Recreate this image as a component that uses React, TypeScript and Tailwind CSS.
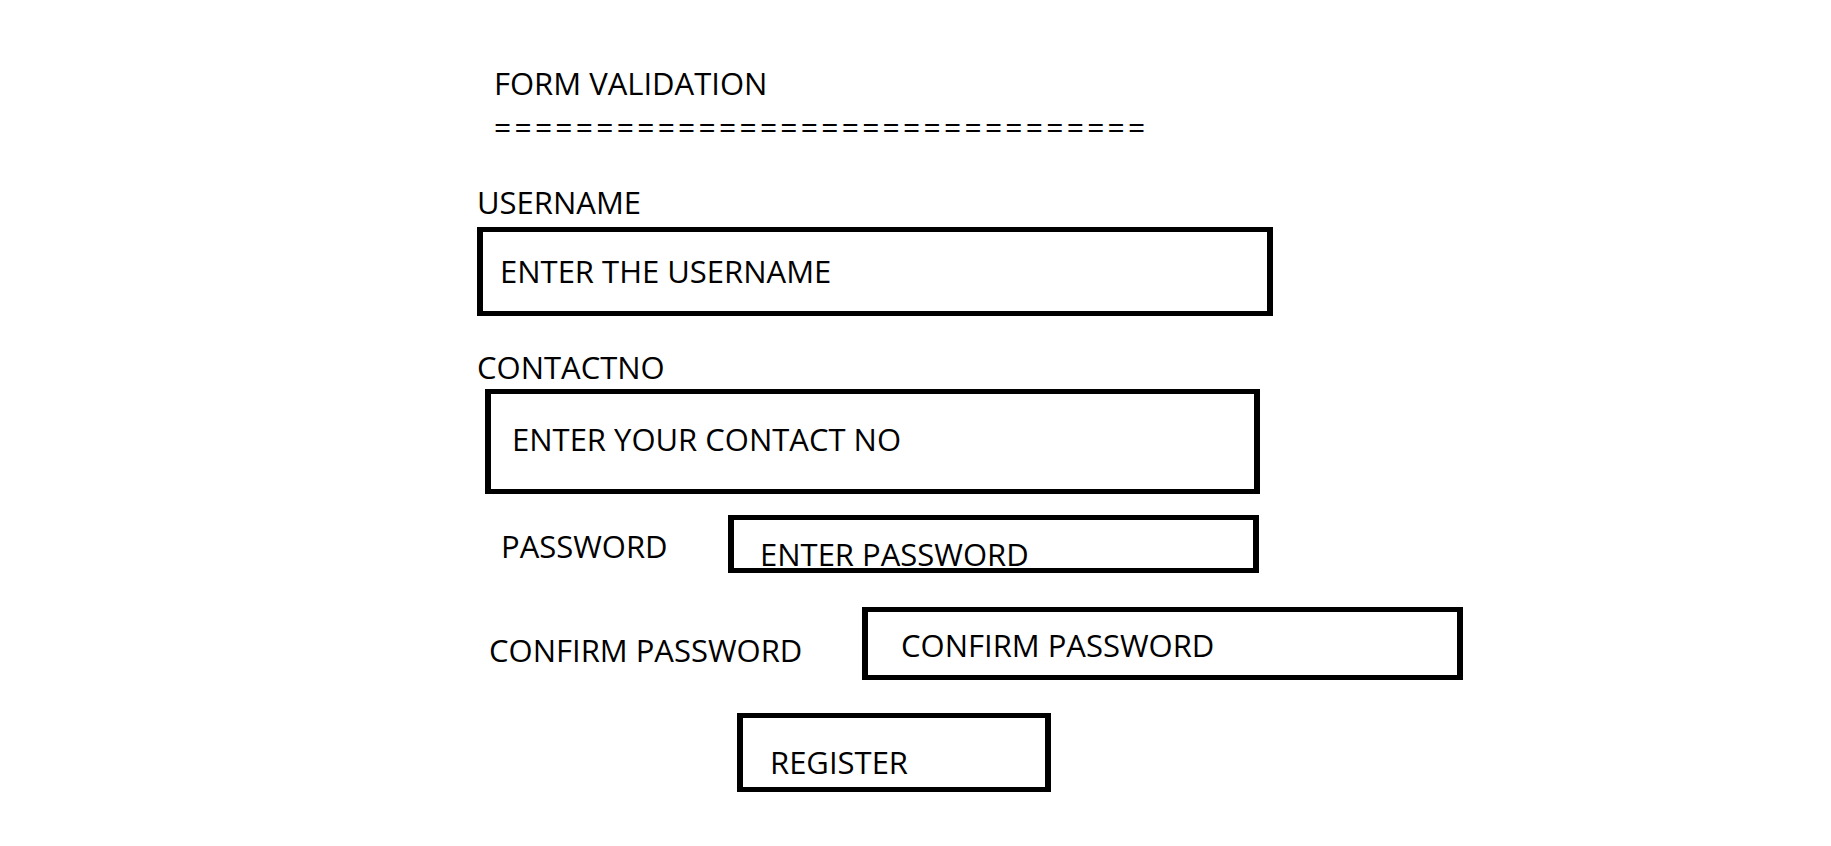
import React from 'react';

const font = { fontFamily: '"Open Sans", "Noto Sans", "Liberation Sans", sans-serif' };

const App: React.FC = () => {
  return (
    <div className="min-h-screen bg-white text-black" style={font}>
      <div className="flex flex-col items-start pl-[477px] pt-[68px] text-[31px] leading-none">
        {/* Title */}
        <h1 className="ml-[17px] text-[31px] font-normal leading-none">FORM VALIDATION</h1>
        <div className="ml-[17px] mt-[13px] text-[30px] tracking-[3.3px] leading-none">================================</div>

        {/* Username */}
        <label className="mt-[45px]">USERNAME</label>
        <div className="mt-[9px] flex h-[89px] w-[796px] items-center border-x-[6px] border-y-[5px] border-black pl-[17px]">
          <span>ENTER THE USERNAME</span>
        </div>

        {/* Contact */}
        <label className="mt-[36px]">CONTACTNO</label>
        <div className="ml-[8px] mt-[6px] flex h-[105px] w-[775px] items-center border-x-[6px] border-y-[5px] border-black pb-[4px] pl-[21px]">
          <span>ENTER YOUR CONTACT NO</span>
        </div>

        {/* Password */}
        <div className="ml-[24px] mt-[21px] flex items-start">
          <label className="mt-[16px] w-[227px]">PASSWORD</label>
          <div className="h-[58px] w-[531px] border-x-[6px] border-y-[5px] border-black pl-[26px] pt-[19px]">
            <span>ENTER PASSWORD</span>
          </div>
        </div>

        {/* Confirm password */}
        <div className="ml-[12px] mt-[34px] flex items-start">
          <label className="mt-[28px] w-[373px]">CONFIRM PASSWORD</label>
          <div className="h-[73px] w-[601px] border-x-[6px] border-y-[5px] border-black pl-[33px] pt-[18px]">
            <span>CONFIRM PASSWORD</span>
          </div>
        </div>

        {/* Register */}
        <button className="ml-[260px] mt-[33px] h-[79px] w-[314px] border-x-[6px] border-y-[5px] border-black pl-[27px] pt-[20px] text-left text-[31px] leading-none">
          REGISTER
        </button>
      </div>
    </div>
  );
};

export default App;
